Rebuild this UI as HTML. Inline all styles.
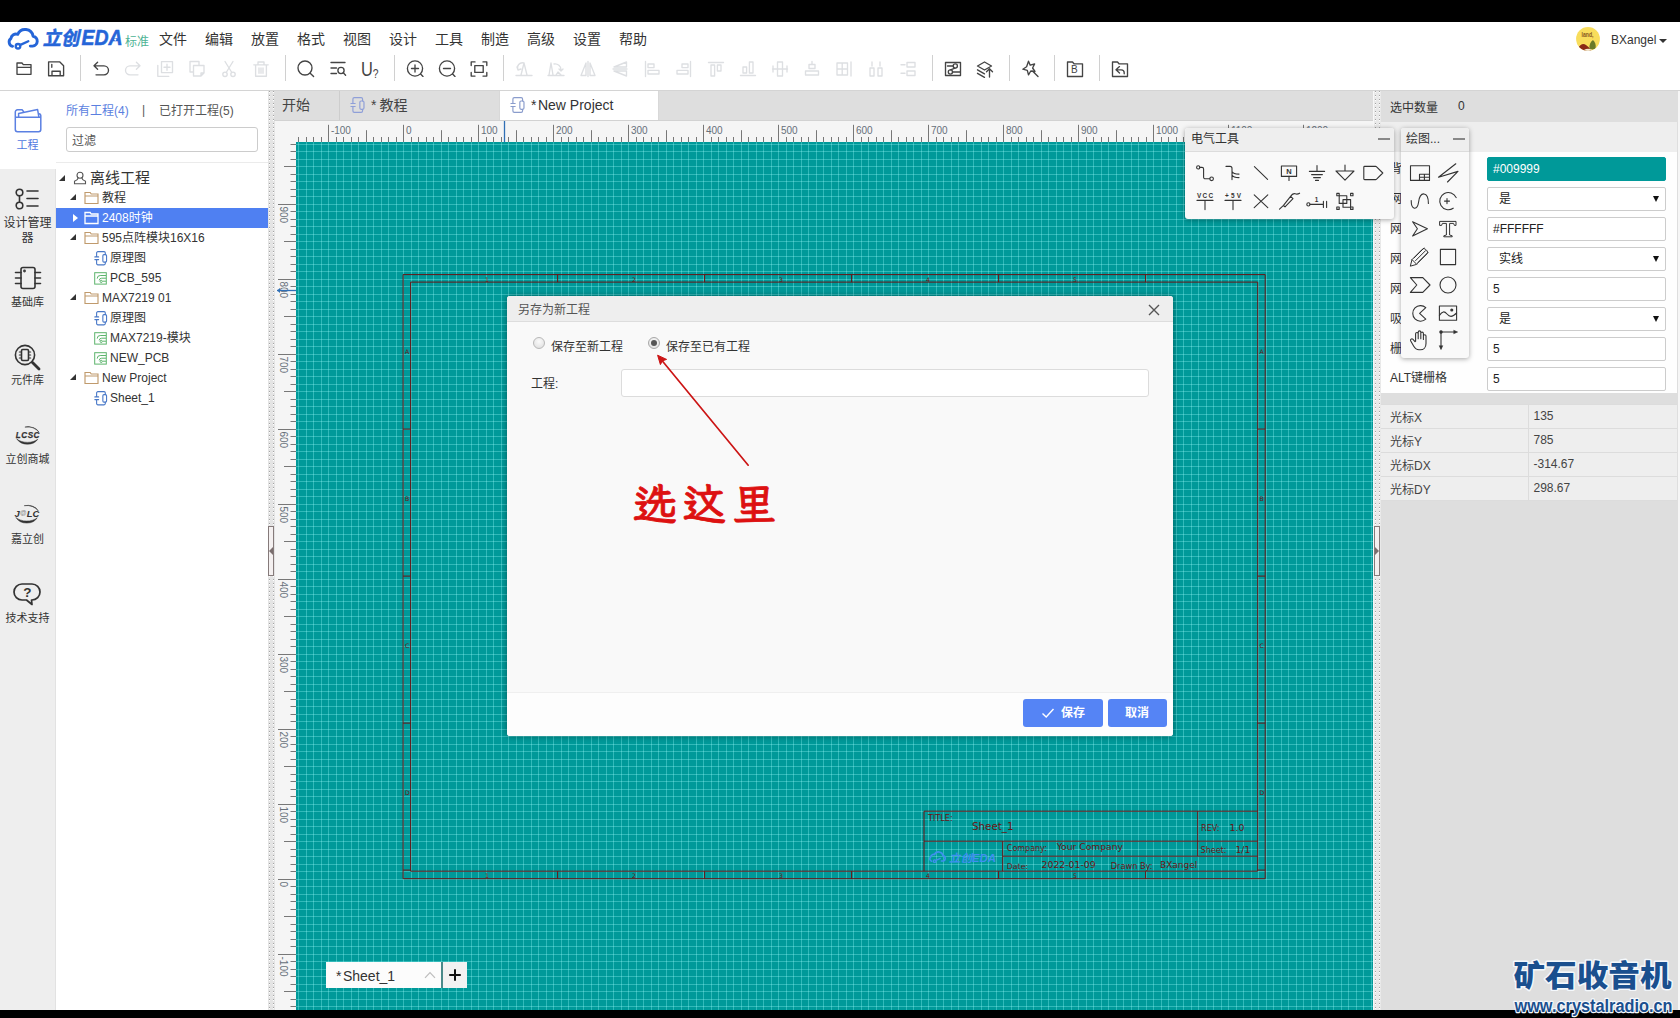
<!DOCTYPE html>
<html lang="zh-CN">
<head>
<meta charset="utf-8">
<title>立创EDA 标准 - 另存为新工程</title>
<style>
*{box-sizing:border-box;margin:0;padding:0}
html,body{width:1680px;height:1018px;overflow:hidden;background:#000}
body{position:relative;font-family:"Liberation Sans","Noto Sans CJK SC",sans-serif;font-size:12px;color:#333;line-height:1}
.abs{position:absolute}
#app{position:absolute;left:0;top:0;width:1680px;height:1018px;background:#dedede;overflow:hidden}
.bar{position:absolute;left:0;width:1680px;background:#000}
#hdr{position:absolute;left:0;top:22px;width:1680px;height:69px;background:#fff;border-bottom:1px solid #d4d4d4}
.menu span{position:absolute;top:10px;font-size:14px;color:#333;white-space:nowrap;line-height:14px}
.tsep{position:absolute;top:33px;width:1px;height:26px;background:#d0d0d0}
.tb{position:absolute;top:36px;width:22px;height:22px;overflow:visible}
.tb *{fill:none;stroke:#444;stroke-width:1.35;stroke-linecap:round;stroke-linejoin:round}
.tb.dis *{stroke:#dddfe2}
#nav{position:absolute;left:0;top:91px;width:56px;height:919px;background:#eeeeee;border-right:1px solid #e2e2e2}
.nv{position:absolute;left:0;width:55px;text-align:center;font-size:12px;color:#333;line-height:16px}
.nvi{position:absolute;overflow:visible}
.nvi *{fill:none;stroke:#333;stroke-width:1.6;stroke-linecap:round;stroke-linejoin:round}
.nvi.blue *{stroke:#5b80e2;stroke-width:1.5}
#proj{position:absolute;left:56px;top:91px;width:212px;height:919px;background:#fff}
.tr{position:absolute;left:0;width:212px;height:20px;line-height:20px;font-size:12px;color:#333;white-space:nowrap}
.tr span{position:absolute;top:0}
.tr svg{position:absolute;overflow:visible}
.tri{position:absolute;width:0;height:0;border-style:solid}
.split{position:absolute;top:91px;width:8px;height:919px;background:#ededed}
#tabs{position:absolute;left:274px;top:91px;width:1099px;height:30px;background:#dedede;border-bottom:1px solid #d2d2d2}
.tab{position:absolute;top:0;height:29px;font-size:14px;line-height:29px;color:#444;white-space:nowrap}
#rp{position:absolute;left:1381px;top:91px;width:299px;height:919px;background:#dedede}
.rl{position:absolute;left:9px;font-size:12px;color:#333;white-space:nowrap;line-height:14px}
.ri{position:absolute;left:106px;width:179px;height:24px;background:#fff;border:1px solid #ccc;border-radius:2px;font-size:12px;line-height:22px;padding-left:5px;color:#222;white-space:nowrap}
.ri.sel{padding-left:11px}
.ri.sel:after{content:"";position:absolute;right:6px;top:8px;border:3.3px solid transparent;border-top:6px solid #111;border-bottom:0}
.cr{position:absolute;left:0;width:299px;height:24px;background:#eee;border-top:1px solid #dcdcdc;font-size:12px;line-height:14px;color:#444}
.cr b{position:absolute;left:9px;top:6px;font-weight:normal}
.cr i{position:absolute;left:152.5px;top:4px;font-style:normal}
.cr u{position:absolute;left:147px;top:0;width:1px;height:24px;background:#dcdcdc}
.fl{position:absolute;background:#f9f9f9;border-radius:3px;box-shadow:0 1px 5px rgba(0,0,0,.35)}
.flh{position:absolute;left:0;top:0;height:24px;background:#eeeeee;border-bottom:1px solid #dcdcdc;border-radius:3px 3px 0 0;font-size:12px;line-height:23px;color:#333;white-space:nowrap}
.ti{position:absolute;width:22px;height:22px;overflow:visible}
.ti *{fill:none;stroke:#333;stroke-width:1.1;stroke-linecap:round;stroke-linejoin:round}
#dlg{position:absolute;left:507px;top:296px;width:666px;height:440px;background:#f9f9f9;border-radius:3px;box-shadow:0 0 6px rgba(0,0,0,.4)}
</style>
</head>
<body>
<div id="app">
<div id="hdr">
<svg class="abs" style="left:0;top:0" width="160" height="40" viewBox="0 0 160 40">
<g fill="none" stroke="#2565d8" stroke-linecap="round" stroke-linejoin="round" transform="translate(-.3,.9)">
<path stroke-width="2.9" d="M30.6,23.2 H33 A5,5 0 0 0 33.4,13.3 A8.1,8.1 0 0 0 18,11.4 A5.2,5.2 0 0 0 11.2,15.6 A4.4,4.4 0 0 0 12.9,23.4"/>
<circle cx="18.3" cy="23.4" r="2.3" stroke-width="2.3"/>
<path stroke-width="2.3" d="M20.7,22 L28.6,18.4"/>
</g>
<g fill="#2565d8" stroke="#2565d8" stroke-width=".55" font-family="'Liberation Sans','Noto Sans CJK SC',sans-serif" font-weight="bold" transform="translate(0,-.5)">
<text x="0" y="0" font-size="19" transform="translate(42.8,23.6) skewX(-12)" textLength="36.5" lengthAdjust="spacingAndGlyphs">立创</text>
<text x="81.5" y="23.6" font-size="21.5" font-style="italic" textLength="41" lengthAdjust="spacingAndGlyphs">EDA</text>
</g>
<circle cx="115.3" cy="17.6" r="1.1" fill="#fff"/>
<text x="125" y="23.6" font-size="12" fill="#4db394" font-family="'Liberation Sans','Noto Sans CJK SC',sans-serif">标准</text>
</svg>
<div class="menu">
<span style="left:159px">文件</span><span style="left:205px">编辑</span><span style="left:251px">放置</span><span style="left:297px">格式</span><span style="left:343px">视图</span><span style="left:389px">设计</span><span style="left:435px">工具</span><span style="left:481px">制造</span><span style="left:527px">高级</span><span style="left:573px">设置</span><span style="left:619px">帮助</span>
</div>
<!-- avatar + user -->
<svg class="abs" style="left:1575.2px;top:3.8px" width="26" height="26" viewBox="0 0 26 26">
<defs><clipPath id="avc"><circle cx="13" cy="13" r="11.9"/></clipPath></defs>
<g clip-path="url(#avc)">
<rect width="26" height="26" fill="#f8dd5c"/>
<text x="6.5" y="11" font-size="6.5" font-weight="bold" font-family="'Liberation Sans',sans-serif" fill="#8a5a1e" textLength="12" lengthAdjust="spacingAndGlyphs">land,</text>
<path d="M3,22 q4,-6 8,-3 q3,2 5,5 v4 h-13z" fill="#8a2a16"/>
<path d="M14.5,22.5 q-.5,-6 3.5,-8.5 q3.5,3 2.500,8.500 q-3,2 -6,0z" fill="#6a7a2a"/>
<path d="M9,24 q4,-2.500 8,0 v3 h-8z" fill="#f4ead0"/>
</g>
</svg>
<span class="abs" style="left:1611px;top:11px;font-size:12px;line-height:14px;color:#333">BXangel</span>
<div class="abs" style="left:1659px;top:16.6px;width:0;height:0;border:4px solid transparent;border-top:4px solid #333;border-bottom:0"></div>

<!-- toolbar -->
<svg class="tb" style="left:13px" viewBox="0 0 22 22"><path d="M4,5 h5 l1.3,1.6 h7.7 v9.7 h-14 z M4,9.3 h14"/></svg>
<svg class="tb" style="left:45px" viewBox="0 0 22 22"><path d="M3.6,3.8 h11 l4,4 v9.9 h-15 z M7,17.5 v-4.3 h8.2 v4.3 M6.8,6.3 v3"/></svg>
<div class="tsep" style="left:80px"></div>
<svg class="tb" style="left:90px" viewBox="0 0 22 22"><path d="M7.6,4.3 L4,7.8 L7.6,11.3 M4.2,7.8 H14 a4.5,4.5 0 0 1 0,9 H6"/></svg>
<svg class="tb dis" style="left:122px" viewBox="0 0 22 22"><path d="M14.4,4.3 L18,7.8 L14.4,11.3 M17.8,7.8 H8 a4.5,4.5 0 0 0 0,9 H16"/></svg>
<svg class="tb dis" style="left:154px" viewBox="0 0 22 22"><path d="M7.5,3.6 h11 v11 h-11 z M3.8,7.3 v11 h11 M13,6.2 v6 M10,9.2 h6"/></svg>
<svg class="tb dis" style="left:186px" viewBox="0 0 22 22"><path d="M13,6.5 v-3 h-9 v10.5 h3 M7.5,7.5 h10.5 v7.5 l-3,3 h-7.5 z M15,18 v-3 h3"/></svg>
<svg class="tb dis" style="left:218px" viewBox="0 0 22 22"><path d="M7,3.5 L13.5,14 M15,3.5 L8.5,14"/><circle cx="7" cy="16.3" r="2.2"/><circle cx="15" cy="16.3" r="2.2"/></svg>
<svg class="tb dis" style="left:250px" viewBox="0 0 22 22"><path d="M3.8,6.8 h14.4 M8,6.6 v-2.6 h6 v2.6 M5.6,7 v11.2 h10.8 V7 M9,10v5.3 M11,10v5.3 M13,10v5.3"/></svg>
<div class="tsep" style="left:285px"></div>
<svg class="tb" style="left:295px" viewBox="0 0 22 22"><circle cx="10" cy="10" r="7"/><path d="M15.2,15.2 L18.6,18.6"/></svg>
<svg class="tb" style="left:327px" viewBox="0 0 22 22"><path d="M4,4.5 h14 M4,10 h5.5 M4,15.5 h5.5 M16.3,14.8 L18.6,17.2"/><circle cx="14" cy="12.5" r="3.1"/></svg>
<div class="abs" style="left:361px;top:34px;font-size:20.5px;line-height:26px;color:#444;letter-spacing:-1px;transform:scaleX(.8);transform-origin:0 0;white-space:nowrap">U<span style="font-size:13px;position:relative;top:2px;left:1px">?</span></div>
<div class="tsep" style="left:394px"></div>
<svg class="tb" style="left:404px" viewBox="0 0 22 22"><circle cx="11" cy="10.5" r="7.6"/><path d="M11,7v7 M7.5,10.5h7 M16.6,16 L19,18.4"/></svg>
<svg class="tb" style="left:436px" viewBox="0 0 22 22"><circle cx="11" cy="10.5" r="7.6"/><path d="M7.5,10.5h7 M16.6,16 L19,18.4"/></svg>
<svg class="tb" style="left:468px" viewBox="0 0 22 22"><path d="M3.2,7.5 v-3.6 h3.8 M15,3.9 h3.8 v3.6 M18.8,14.5 v3.6 h-3.8 M7,18.1 h-3.8 v-3.6 M6.8,7.6 h8.4 v6.8 h-8.4 z"/></svg>
<div class="tsep" style="left:503px"></div>
<svg class="tb dis" style="left:513px" viewBox="0 0 22 22"><path d="M3,17.5 h16 M14,17 L11,5 L8,17 M5,12 a5,5 0 0 1 6,-7 M4,9 l1,3 l3,-1"/></svg>
<svg class="tb dis" style="left:545px" viewBox="0 0 22 22"><path d="M3,17.5 h16 M8,17 L6,5 L4,17 M9,6 a6,6 0 0 1 7,6 M14,11 l2,2 l2,-2 M11,17 l2,-3 l3,3"/></svg>
<svg class="tb dis" style="left:577px" viewBox="0 0 22 22"><path d="M11,3.5 v15 M9,5 L4,17.5 h5 z M13,5 L18,17.5 h-5 z"/></svg>
<svg class="tb dis" style="left:609px" viewBox="0 0 22 22"><path d="M4,11 h14 M5,9 L17.5,4 v5 z M5,13 L17.5,18 v-5 z"/></svg>
<svg class="tb dis" style="left:641px" viewBox="0 0 22 22"><path d="M4.5,3.5 v15 M7,6 h6 v3.6 h-6 z M7,12.4 h11 v3.6 h-11 z"/></svg>
<svg class="tb dis" style="left:673px" viewBox="0 0 22 22"><path d="M17.5,3.5 v15 M15,6 h-6 v3.6 h6 z M15,12.4 h-11 v3.6 h11 z"/></svg>
<svg class="tb dis" style="left:705px" viewBox="0 0 22 22"><path d="M3.5,4.5 h15 M6,7 h3.6 v11 h-3.6 z M12.4,7 h3.6 v6 h-3.6 z"/></svg>
<svg class="tb dis" style="left:737px" viewBox="0 0 22 22"><path d="M3.5,17.5 h15 M6,15 h3.6 v-6 h-3.6 z M12.4,15 h3.6 v-11 h-3.6 z"/></svg>
<svg class="tb dis" style="left:769px" viewBox="0 0 22 22"><path d="M3.5,11 h15 M8.5,4 h5 v14 h-5 z M4,8 v6 M18,8 v6"/></svg>
<svg class="tb dis" style="left:801px" viewBox="0 0 22 22"><path d="M11,3.5 v3 M8,6.5 h6 v4 h-6 z M4.5,13 h13 v4 h-13 z"/></svg>
<svg class="tb dis" style="left:833px" viewBox="0 0 22 22"><path d="M4,5 h10.5 v12 h-10.5 z M9.2,5 v12 M4,11 h10.5 M18,4 v14"/></svg>
<svg class="tb dis" style="left:865px" viewBox="0 0 22 22"><path d="M5,10 h4 v8 h-4 z M13,10 h4 v8 h-4 z M7,4 v4 M15,4 v4"/></svg>
<svg class="tb dis" style="left:897px" viewBox="0 0 22 22"><path d="M10,4.5 h8 v4.5 h-8 z M10,13 h8 v4.5 h-8 z M4,6.7 h4 M4,15.2 h4"/></svg>
<div class="tsep" style="left:932px"></div>
<svg class="tb" style="left:942px" viewBox="0 0 22 22"><path d="M3.5,4.5 h15 v13 h-15 z M5.5,8 h6 M10.5,14 h8"/><circle cx="13.3" cy="8" r="2.1"/><circle cx="8.4" cy="14" r="2.1"/><path d="M8.5,11.8 L13,10.2"/></svg>
<svg class="tb" style="left:974px" viewBox="0 0 22 22"><path d="M3.5,8 L10.5,4 L17.5,8 L10.5,12 z M3.5,11.8 L10.5,15.8 M3.5,15.3 L10.5,19.3 M15.5,19 v-8 M12.5,13.8 L15.5,10.8 L18.5,13.8"/></svg>
<div class="tsep" style="left:1009px"></div>
<svg class="tb" style="left:1019px" viewBox="0 0 22 22"><path d="M9.5,3.2 L11.2,7.2 L15.6,6 L13.6,10 L16,13.5 L11.8,13 L9.5,16.8 L8.3,12.4 L3.8,11.2 L7.6,8.8 z M13.5,13 L19,18.5"/></svg>
<div class="tsep" style="left:1054px"></div>
<svg class="tb" style="left:1064px" viewBox="0 0 22 22"><path d="M3.5,4 h5 l1.5,1.8 h8.5 v12.7 h-15 z"/></svg>
<span class="abs" style="left:1071px;top:42px;font-size:10px;line-height:12px;color:#444">B</span>
<div class="tsep" style="left:1099px"></div>
<svg class="tb" style="left:1109px" viewBox="0 0 22 22"><path d="M3.5,4 h5 l1.5,1.8 h8.5 v12.7 h-15 z M10.5,8.6 L7,11.8 L10.5,15 M7.2,11.8 h5 a3,3 0 0 1 3,3 v1"/></svg>
</div>
<div id="nav">
<div class="abs" style="left:0;top:0;width:56px;height:78px;background:#fff"></div>
<svg class="nvi blue" style="left:14px;top:17px" width="30" height="26" viewBox="0 0 30 26"><path d="M1.3,9.3 V4 a2.2,2.2 0 0 1 2.2,-2.2 h4.6 l2.1,2.7 M1.3,9.3 H26.8 V21.6 a2.2,2.2 0 0 1 -2.2,2.200 H3.5 a2.2,2.2 0 0 1 -2.2,-2.200 Z M26.8,9.3 V7.600 a1.8,1.8 0 0 0 -1.600,-1.800 M4.600,9 V5.600 L23.600,1.600 L24.900,9"/></svg>
<div class="nv" style="top:46px;color:#4f77e0;font-size:11px">工程</div>

<svg class="nvi" style="left:15px;top:97px" width="26" height="22" viewBox="0 0 26 22"><circle cx="4.5" cy="4.5" r="3.3"/><circle cx="4.5" cy="17.5" r="3.3"/><path d="M4.5,8 v6 M12,3 h11 M12,10.5 h11 M12,18 h11"/></svg>
<div class="nv" style="top:124.5px;line-height:15.5px">设计管理<br>器</div>

<svg class="nvi" style="left:14px;top:175px" width="28" height="24" viewBox="0 0 28 24"><rect x="7" y="1.5" width="14" height="21" rx="2"/><path d="M1.5,6.5 h5.5 M1.5,12 h5.5 M1.5,17.5 h5.5 M21,6.5 h5.5 M21,12 h5.5 M21,17.5 h5.5"/><circle cx="10.5" cy="5" r=".6"/></svg>
<div class="nv" style="top:203px;font-size:11px">基础库</div>

<svg class="nvi" style="left:13px;top:252px" width="30" height="30" viewBox="0 0 30 30"><circle cx="12" cy="12" r="9.6"/><path d="M19.5,19.5 L26,26" style="stroke-width:2.8"/><rect x="8.5" y="6.5" width="7" height="11" rx="1.2"/><path d="M6.3,9h2.2 M6.3,12h2.2 M6.3,15h2.2 M15.5,9h2.2 M15.5,12h2.2 M15.5,15h2.2" style="stroke-width:1.1"/></svg>
<div class="nv" style="top:281.4px;font-size:11px">元件库</div>

<svg class="nvi" style="left:13px;top:333px" width="30" height="24" viewBox="0 0 30 24"><path d="M12.3,3 A11.5,8.7 0 0 1 26,8.2 A15,14 0 0 0 12.3,3z M4,15.2 A11.5,8.7 0 0 0 24.8,15.2 A13,8 0 0 1 4,15.2z" style="fill:#333;stroke-width:.5"/><text x="2.8" y="13.7" font-size="9" font-weight="bold" font-style="italic" letter-spacing=".6" font-family="'Liberation Sans',sans-serif" style="fill:#333;stroke:#333;stroke-width:.25" textLength="24.2" lengthAdjust="spacingAndGlyphs">LCSC</text></svg>
<div class="nv" style="top:360.4px;font-size:11px">立创商城</div>

<svg class="nvi" style="left:12px;top:412px" width="30" height="24" viewBox="0 0 30 24"><path d="M12.6,2.6 A11.5,8.9 0 0 1 26.4,8 A15,14 0 0 0 12.6,2.6z M4.2,14.8 A11.5,8.9 0 0 0 25.2,14.8 A13,8 0 0 1 4.2,14.8z" style="fill:#333;stroke-width:.5"/><text x="2.6" y="13.6" font-size="9.4" font-weight="bold" font-style="italic" font-family="'Liberation Sans',sans-serif" style="fill:#333;stroke:none">J<tspan font-size="6.6" dy="-1.2" dx=".2" font-style="normal" style="fill:#8a8a8a;stroke:none">@</tspan><tspan dy="1.2" dx=".3" style="fill:#333;stroke:none">LC</tspan></text></svg>
<div class="nv" style="top:440px;font-size:11px">嘉立创</div>

<svg class="nvi" style="left:13px;top:491px" width="30" height="24" viewBox="0 0 30 24"><path d="M9,2 h10 a8,8 0 0 1 0,16 h-0.5 l0.5,4.5 l-5.5,-4.5 h-4.5 a8,8 0 0 1 0,-16z" style="stroke-width:1.7"/><text x="10.3" y="15" font-size="13.5" font-weight="bold" font-family="'Liberation Sans',sans-serif" style="fill:#333;stroke:none">?</text></svg>
<div class="nv" style="top:518.5px;font-size:11px">技术支持</div>
</div>

<div id="proj">
<span class="abs" style="left:10px;top:12.6px;font-size:12px;line-height:14px;color:#5b7fdf;white-space:nowrap">所有工程(4)</span>
<span class="abs" style="left:86px;top:12px;font-size:12px;line-height:14px;color:#555">|</span>
<span class="abs" style="left:103px;top:12.6px;font-size:12px;line-height:14px;color:#555;white-space:nowrap">已打开工程(5)</span>
<div class="abs" style="left:10px;top:36px;width:192px;height:25px;border:1px solid #ccc;border-radius:3px;background:#fff;font-size:12px;line-height:27px;padding-left:5px;color:#555;overflow:hidden">过滤</div>
<div class="abs" style="left:0;top:71px;width:212px;height:1px;background:#ebebeb"></div>

<!-- tree: row top = 77 + 20*i (target 168 + 20*i) -->
<div class="tr" style="top:77px"><i class="tri" style="left:3px;top:7px;border-width:0 0 6.5px 6.5px;border-color:transparent transparent #333 transparent"></i>
<svg style="left:17px;top:3px" width="14" height="14" viewBox="0 0 14 14"><g fill="none" stroke="#555" stroke-width="1.1"><circle cx="7" cy="4.3" r="3"/><path d="M5.2,6.8 Q4.8,9 1.5,10.2 V12.8 H12.5 V10.2 Q9.2,9 8.8,6.8"/></g></svg>
<span style="left:34px;font-size:15px">离线工程</span></div>

<div class="tr" style="top:97px"><i class="tri" style="left:14px;top:6px;border-width:0 0 6.5px 6.5px;border-color:transparent transparent #333 transparent"></i>
<svg style="left:28px;top:3px" width="15" height="14" viewBox="0 0 15 14"><path d="M1,1.5 h5.2 l1,1.5 h6.8 v9.5 h-13 z M1,5 h13" fill="none" stroke="#c09a6c" stroke-width="1.15"/></svg>
<span style="left:46px">教程</span></div>

<div class="tr" style="top:117px;background:#4f80f2;color:#fff"><i class="tri" style="left:17px;top:6px;border-width:4px 0 4px 5px;border-color:transparent transparent transparent #fff"></i>
<svg style="left:28px;top:3px" width="15" height="14" viewBox="0 0 15 14"><path d="M1,1.5 h5.2 l1,1.5 h6.8 v9.5 h-13 z M1,5 h13" fill="none" stroke="#fff" stroke-width="1.3"/></svg>
<span style="left:46px">2408时钟</span></div>

<div class="tr" style="top:137px"><i class="tri" style="left:14px;top:6px;border-width:0 0 6.5px 6.5px;border-color:transparent transparent #333 transparent"></i>
<svg style="left:28px;top:3px" width="15" height="14" viewBox="0 0 15 14"><path d="M1,1.5 h5.2 l1,1.5 h6.8 v9.5 h-13 z M1,5 h13" fill="none" stroke="#c09a6c" stroke-width="1.15"/></svg>
<span style="left:46px">595点阵模块16X16</span></div>

<div class="tr" style="top:157px">
<svg style="left:38px;top:2.5px" width="13.5" height="14.5" viewBox="0 0 16 17"><g fill="none" stroke="#4878c8" stroke-width="1.3" stroke-linecap="round"><path d="M3.1,6.9 V2.2 a1.5,1.5 0 0 1 1.5,-1.5 h7.3 a1.5,1.5 0 0 1 1.5,1.5 V4.2 M13.4,13.1 V14.8 a1.5,1.5 0 0 1 -1.5,1.5 h-7.3 a1.5,1.5 0 0 1 -1.5,-1.5 V10.1 M1,6.9 h4.5 M1,10.1 h4.5"/><rect x="10.5" y="4.2" width="4.4" height="8.9" rx="1.3"/></g></svg>
<span style="left:54px">原理图</span></div>

<div class="tr" style="top:177px">
<svg style="left:37.5px;top:4px" width="13" height="13" viewBox="0 0 13 13"><g fill="none" stroke="#5cb46c" stroke-width="1"><rect x=".7" y=".7" width="11.6" height="11.4"/><path d="M12,3.5 H6.2 Q3.2,3.5 3.2,6.6 M12,6.2 H7.6 Q5.4,6.2 5.2,8.4 M12,9.2 H8.6"/><circle cx="7.2" cy="9.4" r="1.1"/></g></svg>
<span style="left:54px">PCB_595</span></div>

<div class="tr" style="top:197px"><i class="tri" style="left:14px;top:6px;border-width:0 0 6.5px 6.5px;border-color:transparent transparent #333 transparent"></i>
<svg style="left:28px;top:3px" width="15" height="14" viewBox="0 0 15 14"><path d="M1,1.5 h5.2 l1,1.5 h6.8 v9.5 h-13 z M1,5 h13" fill="none" stroke="#c09a6c" stroke-width="1.15"/></svg>
<span style="left:46px">MAX7219 01</span></div>

<div class="tr" style="top:217px">
<svg style="left:38px;top:2.5px" width="13.5" height="14.5" viewBox="0 0 16 17"><g fill="none" stroke="#4878c8" stroke-width="1.3" stroke-linecap="round"><path d="M3.1,6.9 V2.2 a1.5,1.5 0 0 1 1.5,-1.5 h7.3 a1.5,1.5 0 0 1 1.5,1.5 V4.2 M13.4,13.1 V14.8 a1.5,1.5 0 0 1 -1.5,1.5 h-7.3 a1.5,1.5 0 0 1 -1.5,-1.5 V10.1 M1,6.9 h4.5 M1,10.1 h4.5"/><rect x="10.5" y="4.2" width="4.4" height="8.9" rx="1.3"/></g></svg>
<span style="left:54px">原理图</span></div>

<div class="tr" style="top:237px">
<svg style="left:37.5px;top:4px" width="13" height="13" viewBox="0 0 13 13"><g fill="none" stroke="#5cb46c" stroke-width="1"><rect x=".7" y=".7" width="11.6" height="11.4"/><path d="M12,3.5 H6.2 Q3.2,3.5 3.2,6.6 M12,6.2 H7.6 Q5.4,6.2 5.2,8.4 M12,9.2 H8.6"/><circle cx="7.2" cy="9.4" r="1.1"/></g></svg>
<span style="left:54px">MAX7219-模块</span></div>

<div class="tr" style="top:257px">
<svg style="left:37.5px;top:4px" width="13" height="13" viewBox="0 0 13 13"><g fill="none" stroke="#5cb46c" stroke-width="1"><rect x=".7" y=".7" width="11.6" height="11.4"/><path d="M12,3.5 H6.2 Q3.2,3.5 3.2,6.6 M12,6.2 H7.6 Q5.4,6.2 5.2,8.4 M12,9.2 H8.6"/><circle cx="7.2" cy="9.4" r="1.1"/></g></svg>
<span style="left:54px">NEW_PCB</span></div>

<div class="tr" style="top:277px"><i class="tri" style="left:14px;top:6px;border-width:0 0 6.5px 6.5px;border-color:transparent transparent #333 transparent"></i>
<svg style="left:28px;top:3px" width="15" height="14" viewBox="0 0 15 14"><path d="M1,1.5 h5.2 l1,1.5 h6.8 v9.5 h-13 z M1,5 h13" fill="none" stroke="#c09a6c" stroke-width="1.15"/></svg>
<span style="left:46px">New Project</span></div>

<div class="tr" style="top:297px">
<svg style="left:38px;top:2.5px" width="13.5" height="14.5" viewBox="0 0 16 17"><g fill="none" stroke="#4878c8" stroke-width="1.3" stroke-linecap="round"><path d="M3.1,6.9 V2.2 a1.5,1.5 0 0 1 1.5,-1.5 h7.3 a1.5,1.5 0 0 1 1.5,1.5 V4.2 M13.4,13.1 V14.8 a1.5,1.5 0 0 1 -1.5,1.5 h-7.3 a1.5,1.5 0 0 1 -1.5,-1.5 V10.1 M1,6.9 h4.5 M1,10.1 h4.5"/><rect x="10.5" y="4.2" width="4.4" height="8.9" rx="1.3"/></g></svg>
<span style="left:54px">Sheet_1</span></div>
</div>

<!-- left splitter -->
<div class="split" style="left:268px;width:7px;background:#e4e4e4"></div>
<svg class="abs" style="left:268px;top:91px" width="7" height="919"><defs><pattern id="dots" width="8" height="4" patternUnits="userSpaceOnUse"><rect x="1" y="0" width="1" height="1" fill="#a4a4a4"/><rect x="1" y="1" width="1" height="1" fill="#fff"/><rect x="5" y="0" width="1" height="1" fill="#a4a4a4"/><rect x="5" y="1" width="1" height="1" fill="#fff"/></pattern></defs><rect width="7" height="919" fill="url(#dots)"/></svg>
<div class="abs" style="left:268px;top:526px;width:6px;height:50px;border:1px solid #857a7a;background:#f4f0f0"></div>
<div class="abs" style="left:269px;top:547px;width:0;height:0;border:4px solid transparent;border-right:4px solid #7a6e6e;border-left:0"></div>
<div id="tabs">
<div class="tab" style="left:0;width:65px;padding-left:8px">开始</div>
<div class="abs" style="left:65px;top:0;width:1px;height:29px;background:#cdcdcd"></div>
<svg class="abs" style="left:75.5px;top:6px" width="15" height="16" viewBox="0 0 16 17"><g fill="none" stroke="#8f9fd8" stroke-width="1.25" stroke-linecap="round"><path d="M3.1,6.9 V2.2 a1.5,1.5 0 0 1 1.5,-1.5 h7.3 a1.5,1.5 0 0 1 1.5,1.5 V4.2 M13.4,13.1 V14.8 a1.5,1.5 0 0 1 -1.5,1.5 h-7.3 a1.5,1.5 0 0 1 -1.5,-1.5 V10.1 M1,6.9 h4.5 M1,10.1 h4.5"/><rect x="10.5" y="4.2" width="4.4" height="8.9" rx="1.3"/></g></svg>
<div class="tab" style="left:97px"><span style="margin-right:3px">*</span>教程</div>
<div class="abs" style="left:225px;top:0;width:160px;height:29px;background:#fff;border-left:1px solid #d8d8d8;border-right:1px solid #d8d8d8"></div>
<svg class="abs" style="left:235.5px;top:6px" width="15" height="16" viewBox="0 0 16 17"><g fill="none" stroke="#8a9ccc" stroke-width="1.25" stroke-linecap="round"><path d="M3.1,6.9 V2.2 a1.5,1.5 0 0 1 1.5,-1.5 h7.3 a1.5,1.5 0 0 1 1.5,1.5 V4.2 M13.4,13.1 V14.8 a1.5,1.5 0 0 1 -1.5,1.5 h-7.3 a1.5,1.5 0 0 1 -1.5,-1.5 V10.1 M1,6.9 h4.5 M1,10.1 h4.5"/><rect x="10.5" y="4.2" width="4.4" height="8.9" rx="1.3"/></g></svg>
<div class="tab" style="left:257px;color:#333"><span style="margin-right:1.5px">*</span>New Project</div>
</div>
<div class="abs" style="left:275px;top:121px;width:1098px;height:21px;background:#f5f5f5"></div>
<div class="abs" style="left:275px;top:121px;width:21px;height:889px;background:#f5f5f5"></div>
<div class="abs" style="left:296px;top:142px;width:1077px;height:868px;background:linear-gradient(to right,rgba(160,255,255,.31) 1px,transparent 1px) 10px 0/15px 15px,linear-gradient(to right,rgba(160,255,255,.31) 1px,transparent 1px) 2px 0/15px 15px,linear-gradient(to bottom,rgba(160,255,255,.31) 1px,transparent 1px) 0 9px/15px 15px,linear-gradient(to bottom,rgba(160,255,255,.31) 1px,transparent 1px) 0 2px/15px 15px,#009999"></div>
<svg class="abs" style="left:0;top:0;pointer-events:none" width="1680" height="1018" viewBox="0 0 1680 1018">
<path d="M298.5,137V142M306.5,137V142M313.5,137V142M321.5,137V142M328.5,124.8V142M336.5,137V142M343.5,137V142M351.5,137V142M358.5,137V142M366.5,130.2V142M373.5,137V142M381.5,137V142M388.5,137V142M396.5,137V142M403.5,124.8V142M411.5,137V142M418.5,137V142M426.5,137V142M433.5,137V142M441.5,130.2V142M448.5,137V142M456.5,137V142M463.5,137V142M471.5,137V142M478.5,124.8V142M486.5,137V142M493.5,137V142M501.5,137V142M508.5,137V142M516.5,130.2V142M523.5,137V142M531.5,137V142M538.5,137V142M546.5,137V142M553.5,124.8V142M561.5,137V142M568.5,137V142M576.5,137V142M583.5,137V142M591.5,130.2V142M598.5,137V142M606.5,137V142M613.5,137V142M621.5,137V142M628.5,124.8V142M636.5,137V142M643.5,137V142M651.5,137V142M658.5,137V142M666.5,130.2V142M673.5,137V142M681.5,137V142M688.5,137V142M696.5,137V142M703.5,124.8V142M711.5,137V142M718.5,137V142M726.5,137V142M733.5,137V142M741.5,130.2V142M748.5,137V142M756.5,137V142M763.5,137V142M771.5,137V142M778.5,124.8V142M786.5,137V142M793.5,137V142M801.5,137V142M808.5,137V142M816.5,130.2V142M823.5,137V142M831.5,137V142M838.5,137V142M846.5,137V142M853.5,124.8V142M861.5,137V142M868.5,137V142M876.5,137V142M883.5,137V142M891.5,130.2V142M898.5,137V142M906.5,137V142M913.5,137V142M921.5,137V142M928.5,124.8V142M936.5,137V142M943.5,137V142M951.5,137V142M958.5,137V142M966.5,130.2V142M973.5,137V142M981.5,137V142M988.5,137V142M996.5,137V142M1003.5,124.8V142M1011.5,137V142M1018.5,137V142M1026.5,137V142M1033.5,137V142M1041.5,130.2V142M1048.5,137V142M1056.5,137V142M1063.5,137V142M1071.5,137V142M1078.5,124.8V142M1086.5,137V142M1093.5,137V142M1101.5,137V142M1108.5,137V142M1116.5,130.2V142M1123.5,137V142M1131.5,137V142M1138.5,137V142M1146.5,137V142M1153.5,124.8V142M1161.5,137V142M1168.5,137V142M1176.5,137V142M1183.5,137V142M1191.5,130.2V142M1198.5,137V142M1206.5,137V142M1213.5,137V142M1221.5,137V142M1228.5,124.8V142M1236.5,137V142M1243.5,137V142M1251.5,137V142M1258.5,137V142M1266.5,130.2V142M1273.5,137V142M1281.5,137V142M1288.5,137V142M1296.5,137V142M1303.5,124.8V142M1311.5,137V142M1318.5,137V142M1326.5,137V142M1333.5,137V142M1341.5,130.2V142M1348.5,137V142M1356.5,137V142M1363.5,137V142M1371.5,137V142M290.5,1006.5H296M290.5,999.5H296M284,991.5H296M290.5,984.5H296M290.5,976.5H296M290.5,969.5H296M290.5,961.5H296M278,954.5H296M290.5,946.5H296M290.5,939.5H296M290.5,931.5H296M290.5,924.5H296M284,916.5H296M290.5,909.5H296M290.5,901.5H296M290.5,894.5H296M290.5,886.5H296M278,879.5H296M290.5,871.5H296M290.5,864.5H296M290.5,856.5H296M290.5,849.5H296M284,841.5H296M290.5,834.5H296M290.5,826.5H296M290.5,819.5H296M290.5,811.5H296M278,804.5H296M290.5,796.5H296M290.5,789.5H296M290.5,781.5H296M290.5,774.5H296M284,766.5H296M290.5,759.5H296M290.5,751.5H296M290.5,744.5H296M290.5,736.5H296M278,729.5H296M290.5,721.5H296M290.5,714.5H296M290.5,706.5H296M290.5,699.5H296M284,691.5H296M290.5,684.5H296M290.5,676.5H296M290.5,669.5H296M290.5,661.5H296M278,654.5H296M290.5,646.5H296M290.5,639.5H296M290.5,631.5H296M290.5,624.5H296M284,616.5H296M290.5,609.5H296M290.5,601.5H296M290.5,594.5H296M290.5,586.5H296M278,579.5H296M290.5,571.5H296M290.5,564.5H296M290.5,556.5H296M290.5,549.5H296M284,541.5H296M290.5,534.5H296M290.5,526.5H296M290.5,519.5H296M290.5,511.5H296M278,504.5H296M290.5,496.5H296M290.5,489.5H296M290.5,481.5H296M290.5,474.5H296M284,466.5H296M290.5,459.5H296M290.5,451.5H296M290.5,444.5H296M290.5,436.5H296M278,429.5H296M290.5,421.5H296M290.5,414.5H296M290.5,406.5H296M290.5,399.5H296M284,391.5H296M290.5,384.5H296M290.5,376.5H296M290.5,369.5H296M290.5,361.5H296M278,354.5H296M290.5,346.5H296M290.5,339.5H296M290.5,331.5H296M290.5,324.5H296M284,316.5H296M290.5,309.5H296M290.5,301.5H296M290.5,294.5H296M290.5,286.5H296M278,279.5H296M290.5,271.5H296M290.5,264.5H296M290.5,256.5H296M290.5,249.5H296M284,241.5H296M290.5,234.5H296M290.5,226.5H296M290.5,219.5H296M290.5,211.5H296M278,204.5H296M290.5,196.5H296M290.5,189.5H296M290.5,181.5H296M290.5,174.5H296M284,166.5H296M290.5,159.5H296M290.5,151.5H296M290.5,144.5H296" stroke="#777" stroke-width="1" fill="none"/>
<g font-family="'Liberation Sans',sans-serif" font-size="10" fill="#66707a">
<text x="330.9" y="133.6">-100</text>
<text x="405.9" y="133.6">0</text>
<text x="480.9" y="133.6">100</text>
<text x="555.9" y="133.6">200</text>
<text x="630.9" y="133.6">300</text>
<text x="705.9" y="133.6">400</text>
<text x="780.9" y="133.6">500</text>
<text x="855.9" y="133.6">600</text>
<text x="930.9" y="133.6">700</text>
<text x="1005.9" y="133.6">800</text>
<text x="1080.9" y="133.6">900</text>
<text x="1155.9" y="133.6">1000</text>
<text x="1230.9" y="133.6">1100</text>
<text x="1305.9" y="133.6">1200</text>
<text transform="translate(279.5,956.5) rotate(90)">-100</text>
<text transform="translate(279.5,881.5) rotate(90)">0</text>
<text transform="translate(279.5,806.5) rotate(90)">100</text>
<text transform="translate(279.5,731.5) rotate(90)">200</text>
<text transform="translate(279.5,656.5) rotate(90)">300</text>
<text transform="translate(279.5,581.5) rotate(90)">400</text>
<text transform="translate(279.5,506.5) rotate(90)">500</text>
<text transform="translate(279.5,431.5) rotate(90)">600</text>
<text transform="translate(279.5,356.5) rotate(90)">700</text>
<text transform="translate(279.5,281.5) rotate(90)">800</text>
<text transform="translate(279.5,206.5) rotate(90)">900</text>
</g>
<path d="M504.5,121V142" stroke="#2f6fb5" stroke-width="1.3"/>
<path d="M277,290.5H296" stroke="#2f6fb5" stroke-width="1.3"/><path d="M277,290.5l3,-2.5v5z" fill="#2f6fb5"/>
</svg>
<svg class="abs" style="left:0;top:0;pointer-events:none" width="1680" height="1018" viewBox="0 0 1680 1018">
<path d="M403.1,274.6H1265.2V878.7H403.1ZM410.6,282.1H1257.7V871.2H410.6ZM557.6,274.6V282.1M557.6,871.2V878.7M704.6,274.6V282.1M704.6,871.2V878.7M851.6,274.6V282.1M851.6,871.2V878.7M998.6,274.6V282.1M998.6,871.2V878.7M1145.6,274.6V282.1M1145.6,871.2V878.7M403.1,429.1H410.6M1257.7,429.1H1265.2M403.1,576.1H410.6M1257.7,576.1H1265.2M403.1,723.1H410.6M1257.7,723.1H1265.2M403.1,870.1H410.6M1257.7,870.1H1265.2M924.0,871.2V811.2H1257.7M924.0,841.2H1257.7M1002.7,856.2H1257.7M1002.7,841.2V871.2M1197.7,811.2V856.2" stroke="#681414" stroke-width="1" fill="none"/>
<g font-family="'DejaVu Sans','Liberation Sans',sans-serif" fill="#681414" font-size="6.2">
<text x="484.9" y="281.5">1</text><text x="484.9" y="878.1">1</text>
<text x="631.9" y="281.5">2</text><text x="631.9" y="878.1">2</text>
<text x="778.9" y="281.5">3</text><text x="778.9" y="878.1">3</text>
<text x="925.9" y="281.5">4</text><text x="925.9" y="878.1">4</text>
<text x="1072.9" y="281.5">5</text><text x="1072.9" y="878.1">5</text>
<text x="404.9" y="354.1">A</text><text x="1259.5" y="354.1">A</text>
<text x="404.9" y="501.1">B</text><text x="1259.5" y="501.1">B</text>
<text x="404.9" y="648.1">C</text><text x="1259.5" y="648.1">C</text>
<text x="404.9" y="795.1">D</text><text x="1259.5" y="795.1">D</text>
</g>
<g font-family="'DejaVu Sans','Liberation Sans',sans-serif" fill="#681414" font-size="6.4">
<text x="927.9" y="820.6" font-size="8.2">TITLE:</text>
<text x="972.0" y="829.9" font-size="10.3">Sheet_1</text>
<text x="1201.0" y="830.6" font-size="8.2">REV:</text>
<text x="1229.6" y="831.0" font-size="9.4">1.0</text>
<text x="1006.8" y="850.8" font-size="8">Company:</text>
<text x="1056.7" y="850.3" font-size="9.2">Your Company</text>
<text x="1200.6" y="853.1" font-size="8">Sheet:</text>
<text x="1235.4" y="853.0" font-size="9.3">1/1</text>
<text x="1006.8" y="868.5" font-size="7.8">Date:</text>
<text x="1041.6" y="867.8" font-size="9.3">2022-01-09</text>
<text x="1110.8" y="868.5" font-size="8.2">Drawn By:</text>
<text x="1160.0" y="868.0" font-size="9">BXangel</text>
</g>
<g transform="translate(929.0,851.6) scale(.55)" fill="none" stroke="#3f8ff0" stroke-linecap="round"><path stroke-width="2.9" d="M22.6,17.2 H25 A5,5 0 0 0 25.4,7.3 A8.1,8.1 0 0 0 10,5.4 A5.2,5.2 0 0 0 3.2,9.6 A4.4,4.4 0 0 0 4.9,17.4"/><circle cx="10.3" cy="17.4" r="2.3" stroke-width="2.3"/><path stroke-width="2.3" d="M12.7,16 L20.6,12.4"/></g>
<text x="949.0" y="862.2" font-family="'Liberation Sans','Noto Sans CJK SC',sans-serif" font-weight="bold" font-style="italic" font-size="11" fill="#3f8ff0" textLength="47" lengthAdjust="spacingAndGlyphs">立创EDA</text>
</svg>
<div class="abs" style="left:326px;top:962px;width:115px;height:26px;background:#fcfcfc;font-size:14px;line-height:28px;padding-left:10px;overflow:hidden;color:#333;white-space:nowrap"><span style="margin-right:1.5px">*</span>Sheet_1</div>
<svg class="abs" style="left:424px;top:971px" width="12" height="8" viewBox="0 0 12 8"><path d="M1,6.8 L6,1.6 L11,6.8" fill="none" stroke="#bdbdbd" stroke-width="1.2"/></svg>
<div class="abs" style="left:441px;top:962px;width:2px;height:26px;background:#4a8a8a"></div>
<div class="abs" style="left:443px;top:962px;width:24px;height:26px;background:#f2f2f2"></div>
<svg class="abs" style="left:447.5px;top:968px" width="14" height="14" viewBox="0 0 14 14"><path d="M7,1.2v11.6M1.2,7h11.6" stroke="#111" stroke-width="2"/></svg>
<!-- right splitter -->
<div class="split" style="left:1373px;width:8px;background:#e9e9e9;border-left:1px solid #f8f8f8"></div>
<svg class="abs" style="left:1374px;top:91px" width="7" height="919"><rect width="7" height="919" fill="url(#dots)"/></svg>
<div class="abs" style="left:1374px;top:526px;width:6px;height:50px;border:1px solid #857a7a;background:#f4f0f0"></div>
<div class="abs" style="left:1375px;top:547px;width:0;height:0;border:4px solid transparent;border-left:4px solid #7a6e6e;border-right:0"></div>

<div id="rp">
<div class="abs" style="left:297px;top:0;width:2px;height:919px;background:#f6f6f6"></div>
<span class="abs" style="left:9px;top:10px;font-size:12px;line-height:14px;color:#333;white-space:nowrap">选中数量</span>
<span class="abs" style="left:77px;top:8px;font-size:12px;line-height:14px;color:#333">0</span>
<div class="abs" style="left:0;top:31px;width:296px;height:30px;background:#eeeeee"></div>
<span class="abs" style="left:24px;top:39px;font-size:12px;line-height:14px;color:#333;white-space:nowrap">画布属性</span>
<div class="abs" style="left:0;top:61px;width:296px;height:241px;background:#fefefe"></div>

<span class="rl" style="top:71px">背景色</span>
<div class="ri" style="top:66px;background:#009999;border-color:#009999;color:#fff">#009999</div>
<span class="rl" style="top:101px">网格可见</span>
<div class="ri sel" style="top:96px">是</div>
<span class="rl" style="top:131px">网格颜色</span>
<div class="ri" style="top:126px">#FFFFFF</div>
<span class="rl" style="top:161px">网格样式</span>
<div class="ri sel" style="top:156px">实线</div>
<span class="rl" style="top:191px">网格大小</span>
<div class="ri" style="top:186px">5</div>
<span class="rl" style="top:221px">吸附</span>
<div class="ri sel" style="top:216px">是</div>
<span class="rl" style="top:251px">栅格尺寸</span>
<div class="ri" style="top:246px">5</div>
<span class="rl" style="top:280px">ALT键栅格</span>
<div class="ri" style="top:276px">5</div>

<div class="cr" style="top:313px;width:296px"><b>光标X</b><u></u><i>135</i></div>
<div class="cr" style="top:337px;width:296px"><b>光标Y</b><u></u><i>785</i></div>
<div class="cr" style="top:361px;width:296px"><b>光标DX</b><u></u><i>-314.67</i></div>
<div class="cr" style="top:385px;width:296px;height:25px;border-bottom:1px solid #dcdcdc"><b>光标DY</b><u></u><i>298.67</i></div>
</div>
<div class="fl" style="left:1185px;top:128px;width:209px;height:91px">
<div class="flh" style="width:209px;padding-left:6px">电气工具</div>
<div class="abs" style="left:193px;top:10px;width:12px;height:2px;background:#888"></div>
<svg class="ti" style="left:9.0px;top:34.0px" viewBox="-11 -11 22 22"><circle cx="-6.8" cy="-5.6" r="1.6"/><circle cx="6.6" cy="5.8" r="1.8"/><path d="M-5.2,-5.6 h2.2 a1.6,1.6 0 0 1 1.6,1.6 v8.2 a1.6,1.6 0 0 0 1.6,1.6 h4.6"/></svg>
<svg class="ti" style="left:37.0px;top:34.0px" viewBox="-11 -11 22 22"><path d="M-7,-6.6 h4 a2,2 0 0 1 2,2 v11.2 M-1,-1.5 c1,2 3,2.6 7,2.6 M-1,2 c1,2 3,2.6 7,2.6"/></svg>
<svg class="ti" style="left:65.0px;top:34.0px" viewBox="-11 -11 22 22"><path d="M-6.6,-6.4 L6.6,6.4"/></svg>
<svg class="ti" style="left:93.0px;top:34.0px" viewBox="-11 -11 22 22"><rect x="-7.6" y="-7" width="15.2" height="10.4"/><path d="M0,3.4 v4"/><text x="0" y="1.2" font-size="7.5" style="fill:#333;stroke:none" font-family="'Liberation Sans',sans-serif" font-weight="bold" text-anchor="middle">N</text></svg>
<svg class="ti" style="left:121.0px;top:34.0px" viewBox="-11 -11 22 22"><path d="M0,-7.4 v5.8 M-7.6,-1.6 h15.2 M-5.4,1.6 h10.8 M-3.4,4.6 h6.8 M-1.5,7.4 h3"/></svg>
<svg class="ti" style="left:149.0px;top:34.0px" viewBox="-11 -11 22 22"><path d="M0,-8 v6 M-9,-2 h18 L0,7.2 z"/></svg>
<svg class="ti" style="left:176.5px;top:34.0px" viewBox="-11 -11 22 22"><path d="M-8.4,-6.6 h11 a1.5,1.5 0 0 1 1,.4 L9.8,0 L3.6,6.2 a1.5,1.5 0 0 1 -1,.4 h-11 a.8,.8 0 0 1 -.8,-.8 v-11.6 a.8,.8 0 0 1 .8,-.8z"/></svg>
<svg class="ti" style="left:9.0px;top:62.0px" viewBox="-11 -11 22 22"><path d="M-8,-.6 h16 M0,-.6 v9.2"/><text x="0" y="-3" font-size="6.4" style="fill:#333;stroke:none" font-family="'Liberation Sans',sans-serif" font-weight="bold" text-anchor="middle" textLength="16">VCC</text></svg>
<svg class="ti" style="left:37.0px;top:62.0px" viewBox="-11 -11 22 22"><path d="M-8,-.6 h16 M0,-.6 v9.2"/><text x="0" y="-3" font-size="6.4" style="fill:#333;stroke:none" font-family="'Liberation Sans',sans-serif" font-weight="bold" text-anchor="middle" textLength="16">+5V</text></svg>
<svg class="ti" style="left:65.0px;top:62.0px" viewBox="-11 -11 22 22"><path d="M-6.8,-6.2 L6.8,6.6 M6.8,-6.2 L-6.8,6.6"/></svg>
<svg class="ti" style="left:93.0px;top:62.0px" viewBox="-11 -11 22 22"><path d="M-9.5,8.2 L-5.5,4.4 L1.6,-4.6 L4,-2.4 L-4,5.8 L-5.5,4.4 M1.6,-4.6 c1.5,-2.5 3,-3.2 4.6,-2.6 s2.6,.6 4.4,-.6"/></svg>
<svg class="ti" style="left:121.0px;top:62.0px" viewBox="-11 -11 22 22"><circle cx="-8.6" cy="3.4" r="1.6"/><path d="M-7,3.4 h13.4 M6.4,.4 v6 M9.6,.4 v6"/><text x="-.5" y="1" font-size="6.4" style="fill:#333;stroke:none" font-family="'Liberation Sans',sans-serif" font-weight="bold" text-anchor="middle">1</text></svg>
<svg class="ti" style="left:149.0px;top:62.0px" viewBox="-11 -11 22 22"><rect x="-5.8" y="-5.2" width="7.6" height="7.6"/><rect x="-2" y="-1.4" width="7.6" height="7.6"/><rect x="-8.2" y="-7.6" width="2.4" height="2.4"/><rect x="5.6" y="-7.6" width="2.4" height="2.4"/><rect x="-8.2" y="6" width="2.4" height="2.4"/><rect x="5.6" y="6" width="2.4" height="2.4"/></svg>
</div>
<div class="fl" style="left:1401px;top:128px;width:68px;height:230px">
<div class="flh" style="width:68px;padding-left:5px">绘图...</div>
<div class="abs" style="left:52px;top:10px;width:12px;height:2px;background:#888"></div>
<svg class="ti" style="left:8.3px;top:34.4px" viewBox="-11 -11 22 22"><rect x="-9.5" y="-7.2" width="19" height="14.6"/><path d="M-.5,7.4 v-6.2 h10 M-.5,4.2 h10 M4.4,1.2 v6.2"/></svg>
<svg class="ti" style="left:36.4px;top:34.4px" viewBox="-11 -11 22 22"><path d="M-9.5,4.2 L7.8,-9.2 M-9.5,4.2 L10,-1.6 L-.5,9"/></svg>
<svg class="ti" style="left:8.3px;top:61.8px" viewBox="-11 -11 22 22"><path d="M-8.8,-.5 C-8.8,9.5 -2.6,9.5 -1.4,1 C0,-10 8.4,-10 8.4,2.5"/></svg>
<svg class="ti" style="left:36.4px;top:61.8px" viewBox="-11 -11 22 22"><path d="M8.2,-3.4 A8.6,8.6 0 1 0 5.2,7.2 M-1,-2.4 v5 M-3.5,.1 h5"/></svg>
<svg class="ti" style="left:8.3px;top:90.3px" viewBox="-11 -11 22 22"><path d="M-7.4,-7.2 L7.4,-.2 L-7.4,7 L-2.6,-.2 z"/></svg>
<svg class="ti" style="left:36.4px;top:90.3px" viewBox="-11 -11 22 22"><path d="M-8,-7.6 h16 v4 h-1.6 l-.8,-2 h-4 v11.6 l2.6,.8 v1 h-8.4 v-1 l2.6,-.8 v-11.6 h-4 l-.8,2 h-1.6z" style="stroke-width:1"/></svg>
<svg class="ti" style="left:8.3px;top:118.2px" viewBox="-11 -11 22 22"><path d="M-9.6,8.8 L-8,2.6 L2.4,-7.8 a2.2,2.2 0 0 1 3,0 l1.6,1.6 a2.2,2.2 0 0 1 0,3 L-3.4,7.2 z M-8,2.6 L-3.4,7.2 M-6,1 L4,-9 M-2,5.4 L8,-4.6 M-4.4,3.6 L5.6,-6.4" style="stroke-width:1"/></svg>
<svg class="ti" style="left:36.4px;top:118.2px" viewBox="-11 -11 22 22"><rect x="-7.6" y="-7.6" width="15.2" height="15.2"/></svg>
<svg class="ti" style="left:8.3px;top:145.9px" viewBox="-11 -11 22 22"><path d="M-9.6,-7.4 h12.4 L10,0 L2.8,7.4 h-12.4 L-3.2,0 z"/></svg>
<svg class="ti" style="left:36.4px;top:145.9px" viewBox="-11 -11 22 22"><circle cx="0" cy="0" r="8"/></svg>
<svg class="ti" style="left:8.3px;top:173.6px" viewBox="-11 -11 22 22"><path d="M5.8,-5.4 A7.8,7.8 0 1 0 5.8,6.2 L-.4,.4 z"/></svg>
<svg class="ti" style="left:36.4px;top:173.6px" viewBox="-11 -11 22 22"><rect x="-8.6" y="-7" width="17.2" height="14.2"/><path d="M-8.6,2.4 c3,-4.4 5,-4.4 7.6,-1.4 s5,3.6 9.6,-1"/><circle cx="3.8" cy="-3" r="1" style="fill:#333"/></svg>
<svg class="ti" style="left:8.3px;top:201.4px" viewBox="-11 -11 22 22"><path d="M-4.4,1.2 v-7.4 a1.3,1.3 0 0 1 2.6,0 v5 v-6.6 a1.3,1.3 0 0 1 2.6,0 v6.6 v-5.4 a1.3,1.3 0 0 1 2.6,0 v6 v-3.4 a1.3,1.3 0 0 1 2.6,0 v7.4 c0,4 -2.4,6.4 -5.6,6.4 h-1.4 c-2.4,0 -4,-1.4 -5.4,-3.8 l-3,-5.2 a1.4,1.4 0 0 1 2.2,-1.6 l2.2,2.4" style="stroke-width:1.1"/></svg>
<svg class="ti" style="left:36.4px;top:201.4px" viewBox="-11 -11 22 22"><path d="M-7,8 V-8 H7.6"/><path d="M-8.6,6 L-7,9.6 L-5.4,6z M6,-9.6 L9.6,-8 L6,-6.4z" style="fill:#333;stroke-width:.6"/><circle cx="-7" cy="-8" r="1.2" style="fill:#333"/></svg>
</div>
<div id="dlg">
<div class="abs" style="left:0;top:0;width:666px;height:26px;background:#eeeeee;border-bottom:1px solid #dddddd;border-radius:3px 3px 0 0"></div>
<span class="abs" style="left:11px;top:6.5px;font-size:12px;line-height:14px;color:#555;white-space:nowrap">另存为新工程</span>
<svg class="abs" style="left:641px;top:8px" width="12" height="12" viewBox="0 0 12 12"><path d="M1,1 L11,11 M11,1 L1,11" stroke="#555" stroke-width="1.4" fill="none"/></svg>

<div class="abs" style="left:25.5px;top:41px;width:12px;height:12px;border-radius:50%;border:1px solid #b8b8b8;background:radial-gradient(circle at 50% 35%,#fbfbfb,#dcdcdc)"></div>
<span class="abs" style="left:44px;top:43.6px;font-size:12px;line-height:14px;color:#333;white-space:nowrap">保存至新工程</span>
<div class="abs" style="left:140.5px;top:41px;width:12px;height:12px;border-radius:50%;border:1px solid #a8a8a8;background:radial-gradient(circle at 50% 35%,#fbfbfb,#dcdcdc)"></div>
<div class="abs" style="left:143.5px;top:44px;width:6px;height:6px;border-radius:50%;background:#555"></div>
<span class="abs" style="left:159px;top:43.6px;font-size:12px;line-height:14px;color:#333;white-space:nowrap">保存至已有工程</span>

<span class="abs" style="left:24px;top:81px;font-size:12px;line-height:14px;color:#333;white-space:nowrap">工程:</span>
<div class="abs" style="left:114px;top:73px;width:528px;height:28px;background:#fff;border:1px solid #dcdcdc;border-radius:3px"></div>

<div class="abs" style="left:0;top:396px;width:666px;height:44px;background:#fdfdfd;border-top:1px solid #efefef;border-radius:0 0 3px 3px"></div>
<div class="abs" style="left:516px;top:403px;width:80px;height:28px;background:#5584f5;border-radius:3px"></div>
<svg class="abs" style="left:534px;top:411px" width="14" height="12" viewBox="0 0 14 12"><path d="M1.5,6.5 L5.2,10 L12.5,2" stroke="#fff" stroke-width="1.4" fill="none"/></svg>
<span class="abs" style="left:554px;top:410px;font-size:12px;line-height:14px;color:#fff;font-weight:bold;white-space:nowrap">保存</span>
<div class="abs" style="left:601px;top:403px;width:59px;height:28px;background:#5584f5;border-radius:3px"></div>
<span class="abs" style="left:618px;top:410px;font-size:12px;line-height:14px;color:#fff;font-weight:bold;white-space:nowrap">取消</span>
</div>

<!-- red annotation -->
<svg class="abs" style="left:0;top:0;pointer-events:none" width="1680" height="1018" viewBox="0 0 1680 1018">
<path d="M748.2,465.2 L659.5,357.5" stroke="#cc1515" stroke-width="1.7" fill="none" stroke-linecap="round"/>
<path d="M657.6,355.2 L666.6,359.4 L662.6,360.8 L660.4,364.6 z" fill="#cc1515" stroke="#cc1515" stroke-width="1" stroke-linejoin="round"/>
<text x="633" y="520" font-family="'LXGW WenKai TC','Noto Serif CJK SC',serif" font-weight="bold" font-size="44" fill="#dd1111" stroke="#dd1111" stroke-width=".8" letter-spacing="5.5">选这里</text>
</svg>
<!-- watermark -->
<svg class="abs" style="left:1500px;top:950px" width="180" height="68" viewBox="0 0 180 68">
<g font-family="'Liberation Sans','Noto Sans CJK SC',sans-serif" fill="#1a4f8e" stroke="#f4f8fc" stroke-linejoin="round" paint-order="stroke">
<text x="13.5" y="36.4" font-size="29.5" font-weight="900" stroke-width="2.8" textLength="158" lengthAdjust="spacingAndGlyphs">矿石收音机</text>
</g>
</svg>
<div class="bar" style="top:0;height:22px"></div>
<div class="bar" style="top:1010px;height:8px"></div>
<svg class="abs" style="left:1500px;top:990px" width="180" height="28" viewBox="0 0 180 28">
<text x="14.5" y="22.2" font-family="'Liberation Sans',sans-serif" font-size="17.5" font-weight="bold" fill="#1a4f8e" stroke="#f4f8fc" stroke-width="2.4" stroke-linejoin="round" paint-order="stroke" textLength="158" lengthAdjust="spacingAndGlyphs">www.crystalradio.cn</text>
</svg>
</div>
</body>
</html>
